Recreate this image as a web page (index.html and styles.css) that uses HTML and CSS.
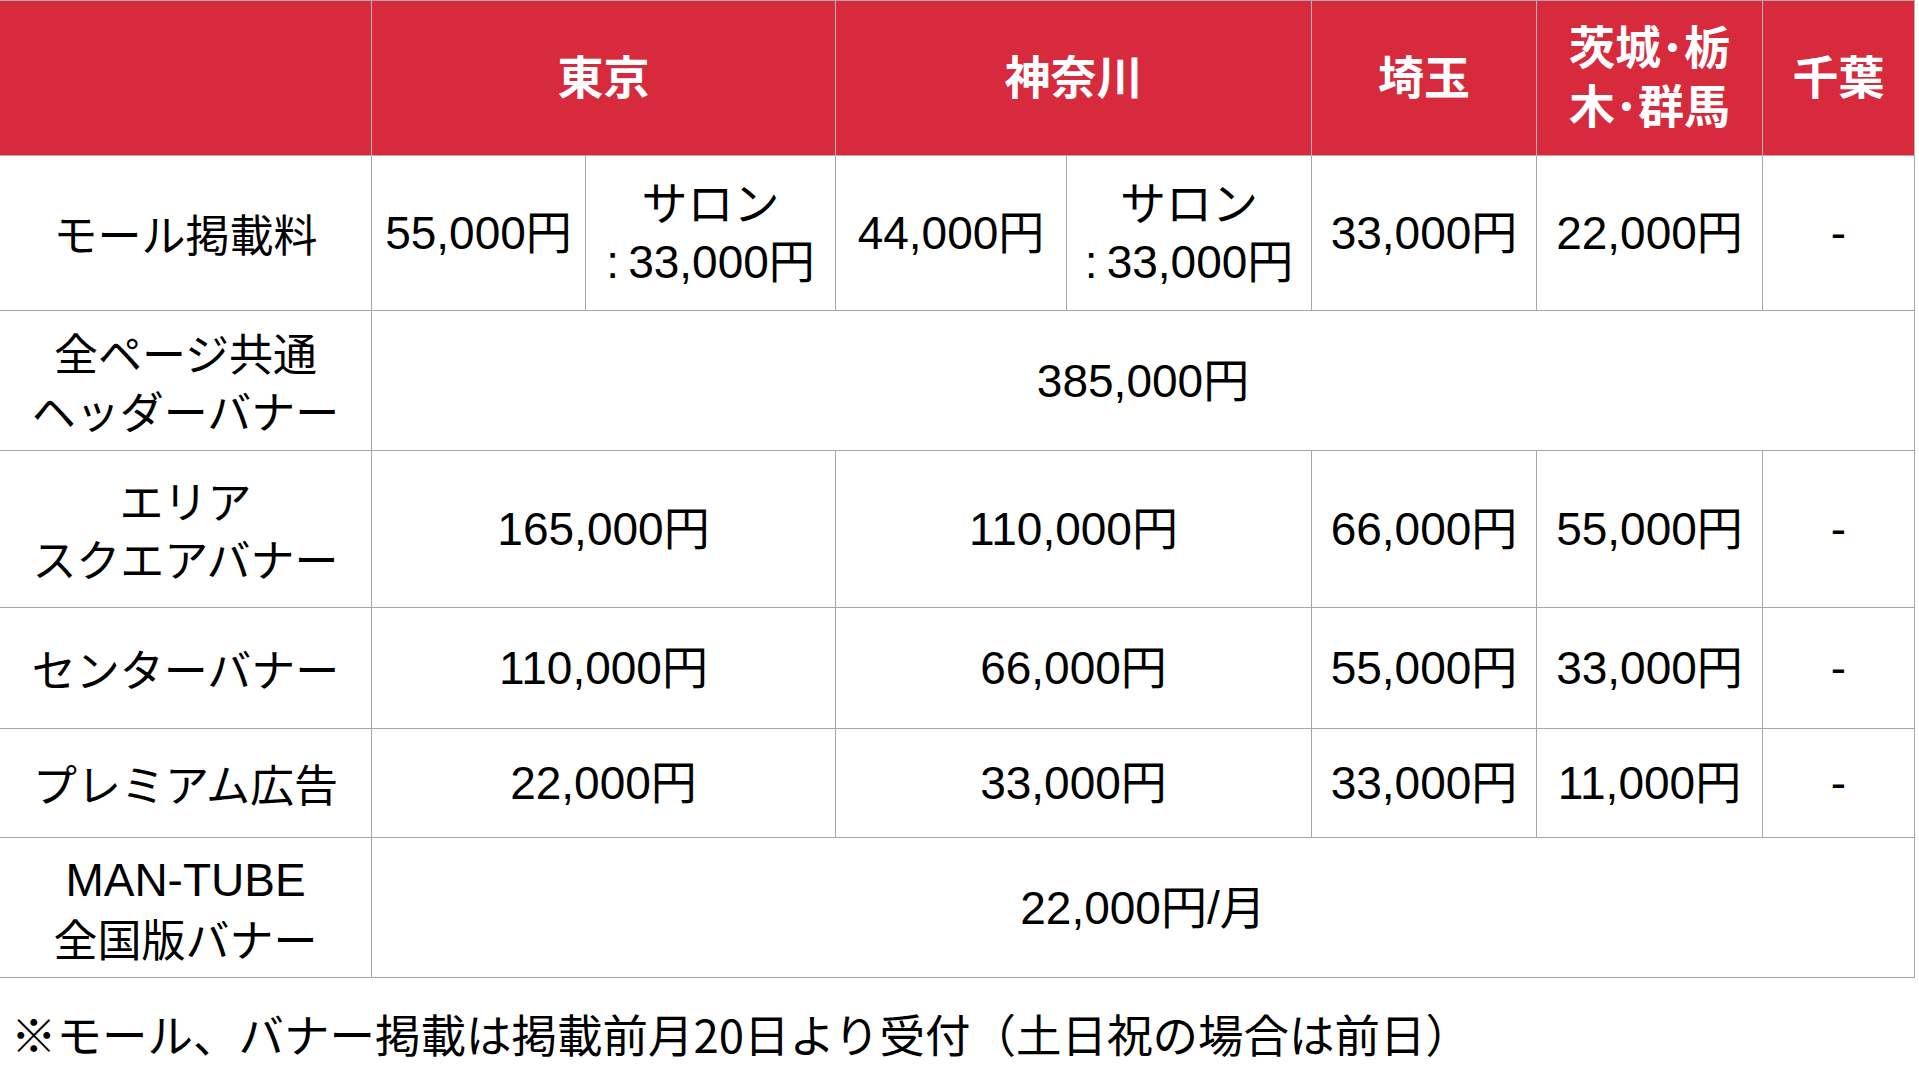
FILE: index.html
```html
<!DOCTYPE html>
<html lang="ja">
<head>
<meta charset="utf-8">
<title>掲載料金表</title>
<link rel="stylesheet" href="styles.css">
</head>
<body>
<div class="price-table">
  <div class="cell head"></div>
  <div class="cell head span2">東京</div>
  <div class="cell head span2">神奈川</div>
  <div class="cell head">埼玉</div>
  <div class="cell head">茨城･栃<br>木･群馬</div>
  <div class="cell head">千葉</div>

  <div class="cell label">モール掲載料</div>
  <div class="cell">55,000円</div>
  <div class="cell">サロン<br>:&thinsp;33,000円</div>
  <div class="cell">44,000円</div>
  <div class="cell">サロン<br>:&thinsp;33,000円</div>
  <div class="cell">33,000円</div>
  <div class="cell">22,000円</div>
  <div class="cell">-</div>

  <div class="cell label">全ページ共通<br>ヘッダーバナー</div>
  <div class="cell span7">385,000円</div>

  <div class="cell label">エリア<br>スクエアバナー</div>
  <div class="cell span2">165,000円</div>
  <div class="cell span2">110,000円</div>
  <div class="cell">66,000円</div>
  <div class="cell">55,000円</div>
  <div class="cell">-</div>

  <div class="cell label">センターバナー</div>
  <div class="cell span2">110,000円</div>
  <div class="cell span2">66,000円</div>
  <div class="cell">55,000円</div>
  <div class="cell">33,000円</div>
  <div class="cell">-</div>

  <div class="cell label">プレミアム広告</div>
  <div class="cell span2">22,000円</div>
  <div class="cell span2">33,000円</div>
  <div class="cell">33,000円</div>
  <div class="cell">11,000円</div>
  <div class="cell">-</div>

  <div class="cell label"><div class="inner"><span class="latin">MAN-TUBE</span><br>全国版バナー</div></div>
  <div class="cell span7">22,000円/月</div>
</div>
<p class="note">※モール、バナー掲載は掲載前月20日より受付（土日祝の場合は前日）</p>
</body>
</html>
```

FILE: styles.css
```css
html, body {
  margin: 0;
  padding: 0;
  background: #ffffff;
}

body {
  width: 1919px;
  height: 1080px;
  overflow: hidden;
  font-family: "Liberation Sans", "Noto Sans CJK JP", Arial, sans-serif;
  color: #000000;
}

.price-table {
  display: grid;
  width: 1915px;
  grid-template-columns: 372px 214px 250px 231px 245px 225px 226px 152px;
  grid-template-rows: 155px 155px 140px 157px 121px 109px 140px;
  border-top: 1px solid #b3a4a6;
  box-sizing: content-box;
}

.cell {
  box-sizing: border-box;
  display: flex;
  align-items: center;
  justify-content: center;
  text-align: center;
  font-size: 46px;
  line-height: 58px;
  border-right: 1px solid #a6a6a6;
  border-bottom: 1px solid #a6a6a6;
  background: #ffffff;
}

.cell.head {
  background: #d72a3c;
  color: #ffffff;
  font-weight: bold;
  line-height: 59px;
  border-right-color: #b9b0b1;
  border-bottom-color: #b9a5a7;
}

.cell.label {
  font-family: "Noto Sans CJK JP", "Liberation Sans", sans-serif;
  font-size: 44px;
  line-height: 58px;
}

.inner {
  text-align: center;
}

.latin {
  font-family: "Liberation Sans", Arial, sans-serif;
  font-size: 46px;
}

.span2 {
  grid-column: span 2;
}

.span7 {
  grid-column: span 7;
}

.note {
  margin: 27px 0 0 0;
  padding-left: 11px;
  font-family: "Noto Sans CJK JP", sans-serif;
  font-size: 45.5px;
  line-height: 56px;
  white-space: nowrap;
}
```
